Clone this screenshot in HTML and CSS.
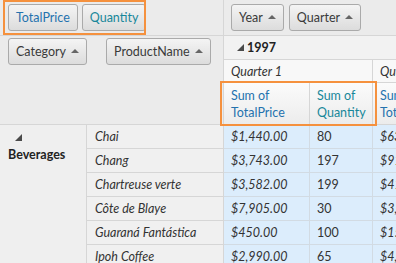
FILE: index.html
```html
<!DOCTYPE html>
<html lang="en">

<head>
    <meta charset="UTF-8">
    <meta name="viewport" content="width=device-width, initial-scale=1.0">
    <title>Pivot Grid</title>
    <link rel="stylesheet" href="styles.css">
</head>

<body>
    <div class="pivot">
        <!-- Field zones -->
        <div class="cell filter-zone">
            <span class="field-btn price">TotalPrice</span>
            <span class="field-btn qty">Quantity</span>
        </div>
        <div class="cell column-zone">
            <span class="field-btn">Year <i class="sort"></i></span>
            <span class="field-btn">Quarter <i class="sort"></i></span>
        </div>
        <div class="cell row-zone">
            <span class="field-btn">Category <i class="sort"></i></span>
            <span class="field-btn">ProductName <i class="sort"></i></span>
        </div>

        <!-- Column headers -->
        <div class="cell year-head"><i class="expand"></i>1997</div>
        <div class="cell quarter-head q1">Quarter 1</div>
        <div class="cell quarter-head">Quarter 2</div>
        <div class="cell measure-head price">Sum of<br>TotalPrice</div>
        <div class="cell measure-head qty">Sum of<br>Quantity</div>
        <div class="cell measure-head price">Sum of<br>TotalPrice</div>

        <!-- Row group -->
        <div class="cell group"><i class="expand"></i><b>Beverages</b></div>

        <div class="cell product">Chai</div>
        <div class="cell value money">$1,440.00</div>
        <div class="cell value">80</div>
        <div class="cell value money">$630.00</div>

        <div class="cell product">Chang</div>
        <div class="cell value money">$3,743.00</div>
        <div class="cell value">197</div>
        <div class="cell value money">$912.00</div>

        <div class="cell product">Chartreuse verte</div>
        <div class="cell value money">$3,582.00</div>
        <div class="cell value">199</div>
        <div class="cell value money">$414.00</div>

        <div class="cell product">Côte de Blaye</div>
        <div class="cell value money">$7,905.00</div>
        <div class="cell value">30</div>
        <div class="cell value money">$3,300.00</div>

        <div class="cell product">Guaraná Fantástica</div>
        <div class="cell value money">$450.00</div>
        <div class="cell value">100</div>
        <div class="cell value money">$153.00</div>

        <div class="cell product">Ipoh Coffee</div>
        <div class="cell value money">$2,990.00</div>
        <div class="cell value">65</div>
        <div class="cell value money">$4,140.00</div>

        <!-- Highlight frames -->
        <div class="highlight hl-filter"></div>
        <div class="highlight hl-measure"></div>
    </div>
</body>

</html>
```

FILE: styles.css
```css
* {
    box-sizing: border-box;
    margin: 0;
    padding: 0;
}

body {
    font-family: Lato, "Open Sans", sans-serif;
    font-size: 12.5px;
    color: #333;
    background: #fff;
}

.pivot {
    position: relative;
    width: 396px;
    height: 263px;
    overflow: hidden;
    display: grid;
    grid-template-columns: 87px 137px 86px 63px 86px;
    grid-template-rows: 36px 24px 23px 42px repeat(6, 24px);
    background: #ebebeb;
}

.cell {
    border-right: 1px solid #d6d6d6;
    border-bottom: 1px solid #d6d6d6;
    overflow: hidden;
    white-space: nowrap;
}

/* field zones */
.filter-zone {
    grid-column: 1 / 3;
    display: flex;
    gap: 4px;
    padding: 4px 0 0 8px;
}

.column-zone {
    grid-column: 3 / 6;
    display: flex;
    gap: 5px;
    padding: 4px 0 0 7px;
    border-right: none;
}

.row-zone {
    grid-column: 1 / 3;
    grid-row: 2 / 5;
    display: flex;
    align-items: flex-start;
    gap: 19px;
    padding: 2px 0 0 8px;
}

.field-btn {
    display: inline-flex;
    align-items: center;
    gap: 5px;
    height: 27px;
    padding: 0 7px;
    border: 1px solid #aaa;
    border-radius: 3px;
    background: linear-gradient(#f4f4f4, #dcdcdc);
    color: #3a3a3a;
}

.field-btn.price {
    color: #2472ae;
}

.field-btn.qty {
    color: #17879a;
}

.sort {
    width: 0;
    height: 0;
    border-left: 4px solid transparent;
    border-right: 4px solid transparent;
    border-bottom: 4px solid #666;
    margin-top: -1px;
}

.expand {
    display: inline-block;
    width: 0;
    height: 0;
    border-left: 7px solid transparent;
    border-bottom: 7px solid #4a4a4a;
}

/* column headers */
.year-head {
    grid-column: 3 / 6;
    display: flex;
    align-items: center;
    gap: 3px;
    padding-left: 13px;
    background: #f2f2f2;
    font-weight: bold;
    color: #222;
    border-right: none;
}

.quarter-head {
    display: flex;
    align-items: center;
    padding-left: 7px;
    background: #f8f8f8;
    font-style: italic;
}

.quarter-head.q1 {
    grid-column: 3 / 5;
}

.measure-head {
    padding: 4px 7px 0;
    line-height: 17px;
    background: linear-gradient(#fbfbfb, #ececec);
}

.measure-head.price {
    color: #2472ae;
}

.measure-head.qty {
    color: #17879a;
}

/* rows */
.group {
    grid-row: 5 / 11;
    padding: 9px 0 0 8px;
    background: #efefef;
    color: #222;
}

.group .expand {
    display: block;
    margin: 0 0 6px 7px;
}

.product {
    display: flex;
    align-items: center;
    padding-left: 8px;
    background: #f0f0f0;
    font-style: italic;
}

.value {
    display: flex;
    align-items: center;
    padding-left: 7px;
    background: #dcedfc;
    border-color: #d2dbe3;
}

.money {
    font-style: italic;
}

/* highlight frames */
.highlight {
    position: absolute;
    border: 2px solid #f5913e;
}

.hl-filter {
    left: 3px;
    top: 0;
    width: 143px;
    height: 35px;
}

.hl-measure {
    left: 220px;
    top: 81px;
    width: 157px;
    height: 45px;
}
```
